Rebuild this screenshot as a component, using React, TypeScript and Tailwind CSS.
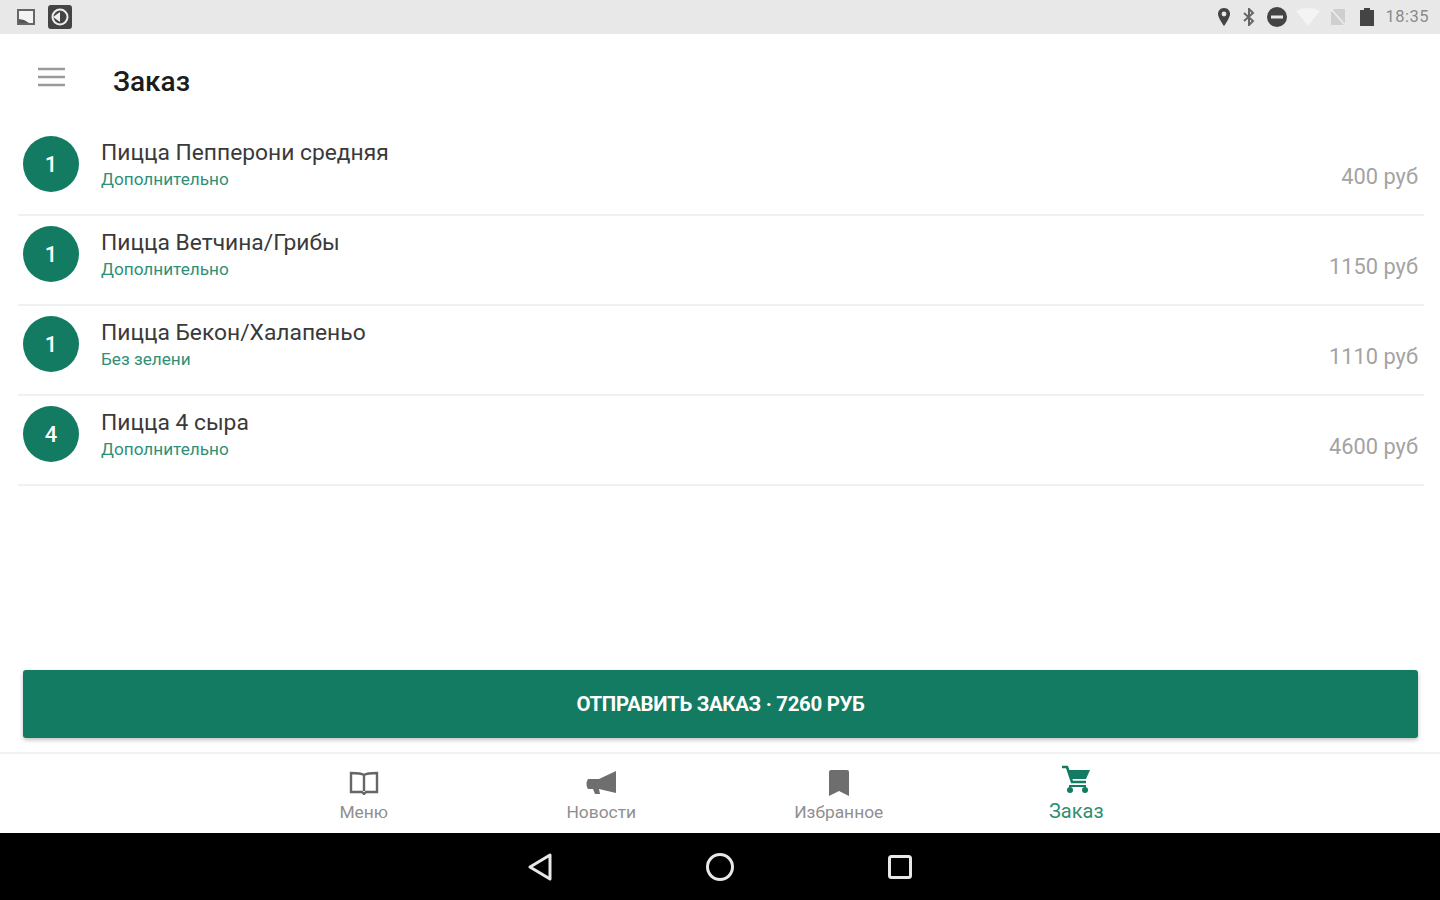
import React from "react";

const items = [
  { q: 1, name: "Пицца Пепперони средняя", sub: "Дополнительно", price: "400 руб" },
  { q: 1, name: "Пицца Ветчина/Грибы", sub: "Дополнительно", price: "1150 руб" },
  { q: 1, name: "Пицца Бекон/Халапеньо", sub: "Без зелени", price: "1110 руб" },
  { q: 4, name: "Пицца 4 сыра", sub: "Дополнительно", price: "4600 руб" },
];

function StatusBar() {
  return (
    <div className="h-[34px] bg-[#e8e8e8] flex items-center justify-between pl-[17px] pr-[11px] shrink-0">
      <div className="flex items-center gap-[14px]">
        <svg width="18" height="16" viewBox="0 0 18 16">
          <rect x="1" y="1" width="16" height="14" fill="#f4f4f4" stroke="#666" strokeWidth="2" />
          <path d="M2 14 L2 10 L7 11 L12 14 Z" fill="#555" />
        </svg>
        <svg width="24" height="24" viewBox="0 0 24 24" className="-ml-[1px]">
          <rect x="0" y="0" width="24" height="24" rx="3" fill="#444" />
          <circle cx="12" cy="12" r="7.5" fill="none" stroke="#eee" strokeWidth="2" />
          <path d="M5 12 L12 7 L12 17 Z" fill="#eee" />
        </svg>
      </div>
      <div className="flex items-center">
        <svg width="14" height="18" viewBox="0 0 14 18" className="mr-[12px]">
          <path d="M7 0 C3 0 1 3 1 6 C1 10 7 18 7 18 C7 18 13 10 13 6 C13 3 11 0 7 0 Z" fill="#444" />
          <circle cx="7" cy="6" r="2.4" fill="#e8e8e8" />
        </svg>
        <svg width="12" height="18" viewBox="0 0 12 18" className="mr-[12px]">
          <path d="M1 5 L10 13 L6 17 L6 1 L10 5 L1 13" fill="none" stroke="#666" strokeWidth="2" />
        </svg>
        <svg width="20" height="20" viewBox="0 0 20 20" className="mr-[9px]">
          <circle cx="10" cy="10" r="10" fill="#444" />
          <rect x="4" y="8.5" width="12" height="3" fill="#e8e8e8" />
        </svg>
        <svg width="24" height="18" viewBox="0 0 24 18" className="mr-[10px]">
          <path d="M0 3 Q12 -3 24 3 L12 18 Z" fill="#f4f4f4" />
        </svg>
        <svg width="16" height="18" viewBox="0 0 16 18" className="mr-[14px]">
          <path d="M4 1 L15 1 L15 17 L1 17 L1 4 Z" fill="#cfcfcf" />
          <path d="M1 1 L15 17" stroke="#eee" strokeWidth="1.5" />
        </svg>
        <svg width="14" height="18" viewBox="0 0 14 18" className="mr-[11px]">
          <path d="M4 0 H10 V2 H14 V18 H0 V2 H4 Z" fill="#444" />
        </svg>
        <span className="text-[16.5px] leading-none text-[#8a8a8a] font-['Roboto',sans-serif] tracking-[0.5px]">18:35</span>
      </div>
    </div>
  );
}

function Header() {
  return (
    <div className="h-[92px] flex items-center pl-[38px] shrink-0">
      <svg width="27" height="20" viewBox="0 0 27 20" className="mb-[6px]">
        <path d="M0 2 H27 M0 10 H27 M0 18 H27" stroke="#9a9a9a" strokeWidth="2.4" />
      </svg>
      <span className="ml-[48px] mt-[4px] text-[28px] font-medium leading-none text-[#1c1c1c]">Заказ</span>
    </div>
  );
}

function Row({ q, name, sub, price }: { q: number; name: string; sub: string; price: string }) {
  return (
    <div className="h-[90px] ml-[18px] mr-[16px] border-b-2 border-[#f0f0f0] flex pl-[5px] pr-[6px] pt-[10px]">
      <div className="w-[56px] h-[56px] rounded-full bg-[#137b62] flex items-center justify-center text-white text-[22px] font-medium shrink-0">
        {q}
      </div>
      <div className="ml-[22px] flex-1 pt-[4px]">
        <div className="text-[22.8px] leading-[26px] text-[#3a3a3a]">{name}</div>
        <div className="text-[17.2px] leading-[20px] mt-[3px] text-[#2f8f77]">{sub}</div>
      </div>
      <div className="text-[21.8px] leading-[24px] text-[#a3a3a3] pt-[29px]">{price}</div>
    </div>
  );
}

function NavItem({ label, active, children }: { label: string; active?: boolean; children: React.ReactNode }) {
  return (
    <div className="w-[237.5px] flex flex-col items-center">
      <div className="h-[34px] flex items-end justify-center">{children}</div>
      <div className={active ? "text-[20px] leading-[24px] mt-[2px] text-[#2f8f77]" : "text-[17.4px] leading-[20px] mt-[5px] text-[#8f8f8f]"}>
        {label}
      </div>
    </div>
  );
}

export default function App() {
  return (
    <div className="w-[1440px] h-[900px] bg-white flex flex-col overflow-hidden font-['Roboto',sans-serif]">
      <StatusBar />
      <Header />
      <div className="shrink-0">
        {items.map((it) => (
          <Row key={it.name} {...it} />
        ))}
      </div>
      <div className="flex-1 flex flex-col justify-end pl-[23px] pr-[22px] pb-[14px]">
        <div className="h-[68px] bg-[#137b62] rounded-[3px] shadow-[0_2px_4px_rgba(0,0,0,0.25)] flex items-center justify-center text-white text-[20.4px] font-bold tracking-[-0.3px]">
          ОТПРАВИТЬ ЗАКАЗ · 7260 РУБ
        </div>
      </div>
      <div className="h-[81px] border-t-2 border-[#f2f2f2] flex justify-center pt-[9px] shrink-0">
        <NavItem label="Меню">
          <svg width="30" height="24" viewBox="0 0 30 24" className="mb-[2px]">
            <path d="M15 4 C12 2 6 2 2 2 V21 H13 L15 23 L17 21 H28 V2 C24 2 18 2 15 4 Z M15 4 V20" fill="none" stroke="#666" strokeWidth="2.4" />
          </svg>
        </NavItem>
        <NavItem label="Новости">
          <svg width="32" height="24" viewBox="0 0 32 24" className="mb-[2px]">
            <path d="M31 0 V22 L14 18 H3 Q0 13 3 8 H14 Z" fill="#6e6e6e" />
            <path d="M8 18 H14 L15 23 H10 Z" fill="#6e6e6e" />
          </svg>
        </NavItem>
        <NavItem label="Избранное">
          <svg width="20" height="26" viewBox="0 0 20 26" className="mb-[1px]">
            <path d="M0 2 Q0 0 2 0 H18 Q20 0 20 2 V26 L10 21 L0 26 Z" fill="#6e6e6e" />
          </svg>
        </NavItem>
        <NavItem label="Заказ" active>
          <svg width="28" height="28" viewBox="0 0 28 28" className="mb-[4px]">
            <path d="M0 2 H5 L10 17 H24" fill="none" stroke="#137b62" strokeWidth="2.6" />
            <path d="M6 5 H28 L24 14 H9 Z" fill="#137b62" />
            <path d="M7 21 H24" stroke="#137b62" strokeWidth="2" />
            <circle cx="8" cy="25" r="3" fill="#137b62" />
            <circle cx="23" cy="25" r="3" fill="#137b62" />
          </svg>
        </NavItem>
      </div>
      <div className="h-[67px] bg-black flex items-center justify-center shrink-0">
        <div className="grid grid-cols-3 w-[540px] justify-items-center items-center">
          <svg width="24" height="28" viewBox="0 0 24 28">
            <path d="M22 2 V26 L2 14 Z" fill="none" stroke="#e8e8e8" strokeWidth="3" strokeLinejoin="round" />
          </svg>
          <svg width="30" height="30" viewBox="0 0 30 30">
            <circle cx="15" cy="15" r="12.5" fill="none" stroke="#e8e8e8" strokeWidth="3" />
          </svg>
          <svg width="26" height="26" viewBox="0 0 26 26">
            <rect x="2.5" y="2.5" width="21" height="21" rx="2" fill="none" stroke="#e8e8e8" strokeWidth="3" />
          </svg>
        </div>
      </div>
    </div>
  );
}
